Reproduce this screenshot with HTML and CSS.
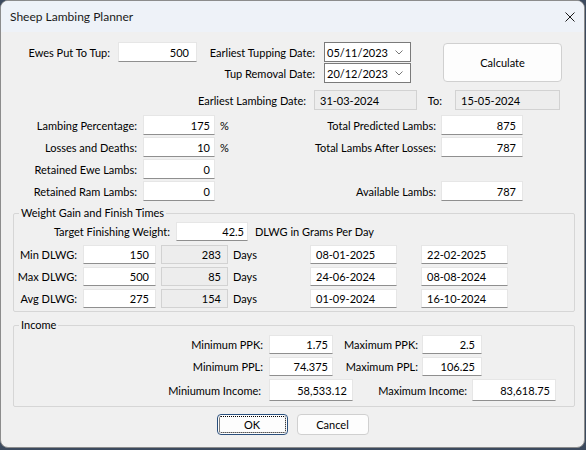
FILE: index.html
```html
<!DOCTYPE html>
<html lang="en">
<head>
  <meta charset="UTF-8">
  <title>Sheep Lambing Planner</title>
  <link rel="stylesheet" href="styles.css">
</head>
<body>

  <div class="win">
    <div class="titlebar">
      <span class="title">Sheep Lambing Planner</span>
      <svg class="close" viewBox="0 0 10 10"><path d="M0.5 0.5L9.5 9.5M9.5 0.5L0.5 9.5"/></svg>
    </div>

    <div class="content">
      <div class="top">
        <div class="tup">
          <div class="row">
            <span class="lbl w-ewes">Ewes Put To Tup:</span>
            <span class="fld ewes">500</span>
            <span class="lbl w-tupdate">Earliest Tupping Date:</span>
            <span class="pick">05/11/2023<svg viewBox="0 0 8 5"><path d="M0.5 0.5L4 4L7.5 0.5"/></svg></span>
          </div>
          <div class="row row-b">
            <span class="lbl w-tupdate">Tup Removal Date:</span>
            <span class="pick">20/12/2023<svg viewBox="0 0 8 5"><path d="M0.5 0.5L4 4L7.5 0.5"/></svg></span>
          </div>
        </div>
        <button class="btn calc">Calculate</button>
      </div>

      <div class="row row-c">
        <span class="lbl w-lamb">Earliest Lambing Date:</span>
        <span class="fld ro left lamb1">31-03-2024</span>
        <span class="lbl w-to">To:</span>
        <span class="fld ro left lamb2">15-05-2024</span>
      </div>

      <div class="stats">
        <div class="row">
          <span class="lbl w-stat">Lambing Percentage:</span>
          <span class="fld stat">175</span>
          <span class="pct">%</span>
          <span class="lbl w-rstat">Total Predicted Lambs:</span>
          <span class="fld rstat">875</span>
        </div>
        <div class="row">
          <span class="lbl w-stat">Losses and Deaths:</span>
          <span class="fld stat">10</span>
          <span class="pct">%</span>
          <span class="lbl w-rstat">Total Lambs After Losses:</span>
          <span class="fld rstat">787</span>
        </div>
        <div class="row">
          <span class="lbl w-stat">Retained Ewe Lambs:</span>
          <span class="fld stat">0</span>
        </div>
        <div class="row">
          <span class="lbl w-stat">Retained Ram Lambs:</span>
          <span class="fld stat">0</span>
          <span class="pct"></span>
          <span class="lbl w-rstat">Available Lambs:</span>
          <span class="fld rstat">787</span>
        </div>
      </div>

      <fieldset class="group weight">
        <legend>Weight Gain and Finish Times</legend>
        <div class="row row-sm target">
          <span class="lbl w-target">Target Finishing Weight:</span>
          <span class="fld target-in">42.5</span>
          <span class="note">DLWG in Grams Per Day</span>
        </div>
        <div class="dlwg">
          <div class="row row-sm">
            <span class="lbl w-dlwg">Min DLWG:</span>
            <span class="fld gain">150</span>
            <span class="fld ro days">283</span>
            <span class="unit">Days</span>
            <span class="fld left finish">08-01-2025</span>
            <span class="fld left finish f2">22-02-2025</span>
          </div>
          <div class="row row-sm">
            <span class="lbl w-dlwg">Max DLWG:</span>
            <span class="fld gain">500</span>
            <span class="fld ro days">85</span>
            <span class="unit">Days</span>
            <span class="fld left finish">24-06-2024</span>
            <span class="fld left finish f2">08-08-2024</span>
          </div>
          <div class="row row-sm">
            <span class="lbl w-dlwg">Avg DLWG:</span>
            <span class="fld gain">275</span>
            <span class="fld ro days">154</span>
            <span class="unit">Days</span>
            <span class="fld left finish">01-09-2024</span>
            <span class="fld left finish f2">16-10-2024</span>
          </div>
        </div>
      </fieldset>

      <fieldset class="group income">
        <legend>Income</legend>
        <div class="row row-sm">
          <span class="lbl w-price">Minimum PPK:</span>
          <span class="fld price">1.75</span>
          <span class="lbl w-mprice">Maximum PPK:</span>
          <span class="fld mprice">2.5</span>
        </div>
        <div class="row row-sm">
          <span class="lbl w-price">Minimum PPL:</span>
          <span class="fld price">74.375</span>
          <span class="lbl w-mprice">Maximum PPL:</span>
          <span class="fld mprice">106.25</span>
        </div>
        <div class="row row-lg">
          <span class="lbl w-inc">Miniumum Income:</span>
          <span class="fld inc">58,533.12</span>
          <span class="lbl w-minc">Maximum Income:</span>
          <span class="fld inc minc">83,618.75</span>
        </div>
      </fieldset>

      <div class="actions">
        <button class="btn ok">OK</button>
        <button class="btn">Cancel</button>
      </div>
    </div>
  </div>

</body>
</html>
```

FILE: styles.css
```css
* {
  box-sizing: border-box;
}
body {
  margin: 0;
  background: #3c4a5e;
  font-family: Lato, "Segoe UI", sans-serif;
  font-size: 11px;
  color: #000;
}
.win {
  width: 585px;
  height: 448px;
  background: #f0f0f0;
  border: 1px solid #8c8c8c;
  border-radius: 8px;
  overflow: hidden;
}
.titlebar {
  height: 31px;
  background: #eef2f8;
  display: flex;
  align-items: center;
  justify-content: space-between;
  padding: 0 9px 0 9px;
}
.title {
  font-size: 12px;
  color: #1a1a1a;
}
.close {
  width: 10px;
  height: 10px;
  fill: none;
  stroke: #1a1a1a;
  stroke-width: 1;
}

/* rows and controls */
.row {
  display: flex;
  align-items: center;
  height: 20px;
}
.row-sm {
  height: 19px;
}
.row-lg {
  height: 22px;
}
.lbl {
  flex: none;
  text-align: right;
  white-space: nowrap;
}
.fld {
  flex: none;
  height: 100%;
  display: flex;
  align-items: center;
  justify-content: flex-end;
  padding: 0 5px;
  background: #fff;
  border: 1px solid #e6e6e6;
  border-bottom-color: #8f8f8f;
}
.fld.left {
  justify-content: flex-start;
}
.fld.ro {
  background: #ededed;
  border: 1px solid #d2d2d2;
}
.pick {
  flex: none;
  width: 87px;
  height: 100%;
  margin-left: 9px;
  display: flex;
  align-items: center;
  justify-content: space-between;
  padding: 0 7px 0 2px;
  background: #fff;
  border: 1px solid #7a7a7a;
}
.pick svg {
  width: 8px;
  height: 5px;
  fill: none;
  stroke: #777;
}
.btn {
  font: inherit;
  color: #000;
  background: #fdfdfd;
  border: 1px solid #d0d0d0;
  border-radius: 4px;
  padding: 0;
}

/* top block */
.top {
  display: flex;
  align-items: flex-start;
  margin-top: 10px;
}
.row-b {
  margin-top: 1px;
  padding-left: 196px;
}
.w-ewes { width: 109px; }
.ewes { width: 79px; margin-left: 8px; padding-right: 7px; }
.w-tupdate { width: 118px; }
.calc {
  width: 119px;
  height: 39px;
  margin-left: 32px;
  margin-top: 1px;
}

.row-c {
  margin-top: 7px;
}
.w-lamb { width: 305px; }
.lamb1 { width: 103px; margin-left: 8px; }
.w-to { width: 25px; }
.lamb2 { width: 105px; margin-left: 13px; }

.stats {
  display: flex;
  flex-direction: column;
  gap: 2px;
  margin-top: 5px;
}
.w-stat { width: 136px; }
.stat { width: 72px; margin-left: 6px; padding-right: 4px; }
.pct { width: 25px; padding-left: 5px; flex: none; }
.w-rstat { width: 196px; }
.rstat { width: 82px; margin-left: 5px; padding-right: 6px; }

/* group boxes */
.group {
  width: 562px;
  margin: 5px 0 0 12px;
  padding: 0 0 3px 0;
  border: 1px solid #d6d6d6;
  border-radius: 2px;
  min-width: 0;
}
.group legend {
  margin-left: 5px;
  padding: 0 2px;
  line-height: 14px;
}
.target {
  margin-top: 2px;
}
.w-target { width: 156px; }
.target-in { width: 72px; margin-left: 6px; padding-right: 3px; }
.note { margin-left: 7px; }
.dlwg {
  display: flex;
  flex-direction: column;
  gap: 3px;
  margin-top: 4px;
}
.w-dlwg { width: 63px; }
.gain { width: 73px; margin-left: 6px; padding-right: 6px; }
.days { width: 67px; margin-left: 5px; padding-right: 6px; }
.unit { flex: none; width: 82px; padding-left: 5px; }
.finish { width: 87px; }
.f2 { margin-left: 24px; }

.income {
  margin-top: 6px;
  padding-bottom: 5px;
}
.income .row {
  margin-top: 3px;
}
.w-price { width: 249px; }
.price { width: 64px; margin-left: 6px; padding-right: 4px; }
.w-mprice { width: 85px; }
.mprice { width: 60px; margin-left: 4px; padding-right: 6px; }
.w-inc { width: 247px; }
.inc { width: 84px; margin-left: 8px; padding-right: 5px; }
.w-minc { width: 114px; }
.minc { margin-left: 5px; }

.actions {
  display: flex;
  justify-content: center;
  gap: 9px;
  margin-top: 7px;
}
.actions .btn {
  width: 72px;
  height: 21px;
}
.actions .ok {
  width: 71px;
  border-color: #2a4f7c;
  outline: 1px dotted #000;
  outline-offset: -3px;
}
```
